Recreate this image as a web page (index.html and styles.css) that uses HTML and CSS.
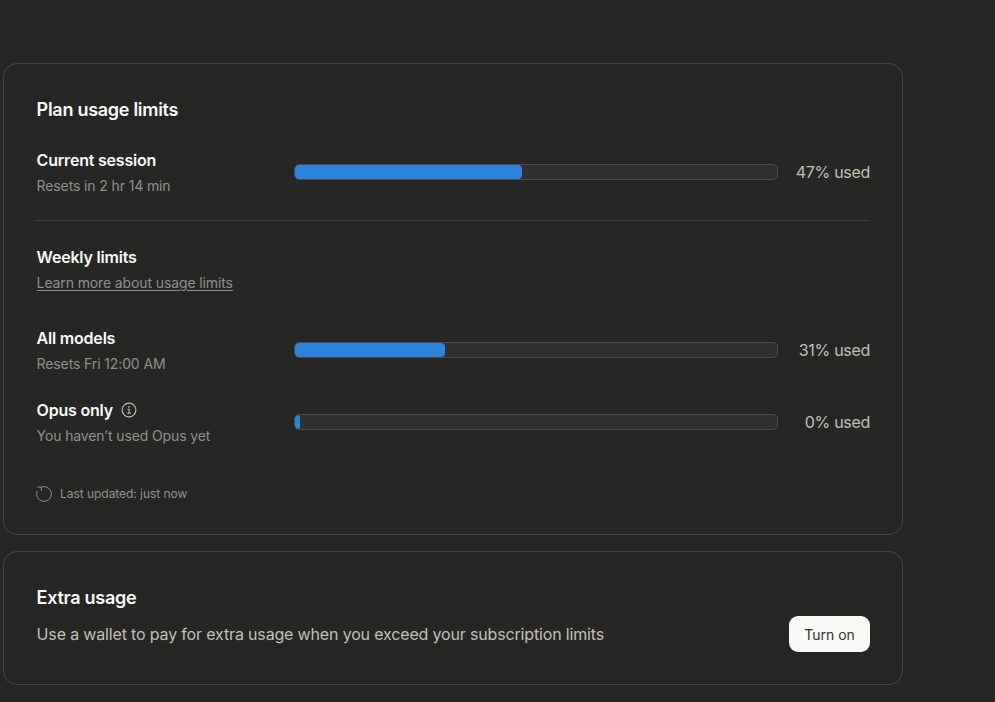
FILE: index.html
```html
<!DOCTYPE html>
<html lang="en">
<head>
  <meta charset="UTF-8">
  <title>Usage</title>
  <link rel="stylesheet" href="styles.css">
</head>
<body>
<main class="page">
  <section class="card usage">
    <h2 class="title">Plan usage limits</h2>

    <div class="row session">
      <div class="label">
        <div class="name">Current session</div>
        <div class="sub">Resets in 2 hr 14 min</div>
      </div>
      <div class="track"><div class="fill" style="width: 47%"></div></div>
      <div class="used">47% used</div>
    </div>

    <hr class="divider">

    <div class="weekly">
      <div class="name">Weekly limits</div>
      <a class="sub learn" href="#">Learn more about usage limits</a>
    </div>

    <div class="row models">
      <div class="label">
        <div class="name">All models</div>
        <div class="sub">Resets Fri 12:00 AM</div>
      </div>
      <div class="track"><div class="fill" style="width: 31.2%"></div></div>
      <div class="used">31% used</div>
    </div>

    <div class="row opus">
      <div class="label">
        <div class="name">Opus only
          <svg class="info" viewBox="0 0 16 16" width="16" height="16" fill="none" stroke="currentColor">
            <circle cx="8" cy="8" r="6.9" stroke-width="1.1"/>
            <path d="M6.6 7.3H8.1V11M6.4 11.1H9.7" stroke-width="1.1"/>
            <circle cx="7.9" cy="4.9" r="0.8" fill="currentColor" stroke="none"/>
          </svg>
        </div>
        <div class="sub">You haven’t used Opus yet</div>
      </div>
      <div class="track"><div class="fill" style="width: 1%"></div></div>
      <div class="used">0% used</div>
    </div>

    <div class="updated">
      <svg class="refresh" viewBox="0 0 16 16" width="16" height="16" fill="none" stroke="currentColor" stroke-width="1">
        <path d="M5.3 1.1A7.4 7.4 0 1 1 1.2 5.1"/>
        <path d="M1.4 1.1H5.3V5"/>
      </svg>
      <span>Last updated: just now</span>
    </div>
  </section>

  <section class="card extra">
    <h2 class="title">Extra usage</h2>
    <div class="extra-row">
      <p class="desc">Use a wallet to pay for extra usage when you exceed your subscription limits</p>
      <button class="turn-on">Turn on</button>
    </div>
  </section>
</main>
</body>
</html>
```

FILE: styles.css
```css
* {
  margin: 0;
  padding: 0;
  box-sizing: border-box;
}
body {
  background-color: #262624;
  font-family: Inter, "Liberation Sans", sans-serif;
  color: #faf9f5;
  overflow: hidden;
}
.page {
  width: 900px;
  margin: 63px 0 0 3px;
  display: flex;
  flex-direction: column;
  gap: 16px;
}
.card {
  border: 1px solid #464644;
  border-radius: 14px;
  padding: 34px 32px 0 32px;
}
.usage {
  height: 472px;
}
.title {
  font-size: 18px;
  line-height: 24px;
  font-weight: 600;
  letter-spacing: -0.28px;
  padding-left: 0.6px;
}
.row {
  display: grid;
  grid-template-columns: 258px 484px 1fr;
  align-items: center;
}
.session {
  margin-top: 26px;
}
.models {
  margin-top: 33px;
}
.opus {
  margin-top: 24px;
}
.label,
.weekly,
.desc {
  padding-left: 0.6px;
}
.name {
  font-size: 16px;
  line-height: 24px;
  font-weight: 600;
  letter-spacing: -0.2px;
  display: flex;
  align-items: center;
  gap: 8px;
}
.sub {
  display: block;
  font-size: 14px;
  line-height: 20px;
  margin-top: 4px;
  color: #91908a;
  letter-spacing: -0.12px;
}
.track {
  height: 16px;
  background-color: #30302e;
  border: 1px solid #4a4a47;
  border-radius: 5px;
  overflow: hidden;
}
.fill {
  height: 100%;
  background-color: #2c84db;
  border-radius: 4px;
}
.used {
  text-align: right;
  font-size: 16px;
  color: #c2c0b6;
  letter-spacing: -0.3px;
}
.divider {
  border: 0;
  border-top: 1px solid #3e3e3c;
  margin-top: 24px;
}
.weekly {
  margin-top: 24px;
}
.learn {
  width: max-content;
  text-decoration: underline;
  text-underline-offset: 2px;
}
.info {
  color: #c2c0b6;
}
.updated {
  display: flex;
  align-items: center;
  gap: 8px;
  margin-top: 40px;
  font-size: 12px;
  line-height: 16px;
  color: #91908a;
  letter-spacing: -0.04px;
}
.refresh {
  color: #91908a;
}
.extra {
  height: 134px;
}
.extra-row {
  display: flex;
  align-items: center;
  justify-content: space-between;
  margin-top: 6px;
}
.desc {
  font-size: 16px;
  line-height: 24px;
  color: #c2c0b6;
  letter-spacing: -0.16px;
}
.turn-on {
  width: 81px;
  height: 36px;
  border: none;
  border-radius: 9px;
  background-color: #faf9f5;
  color: #30302e;
  font-family: inherit;
  font-size: 14px;
}
```
